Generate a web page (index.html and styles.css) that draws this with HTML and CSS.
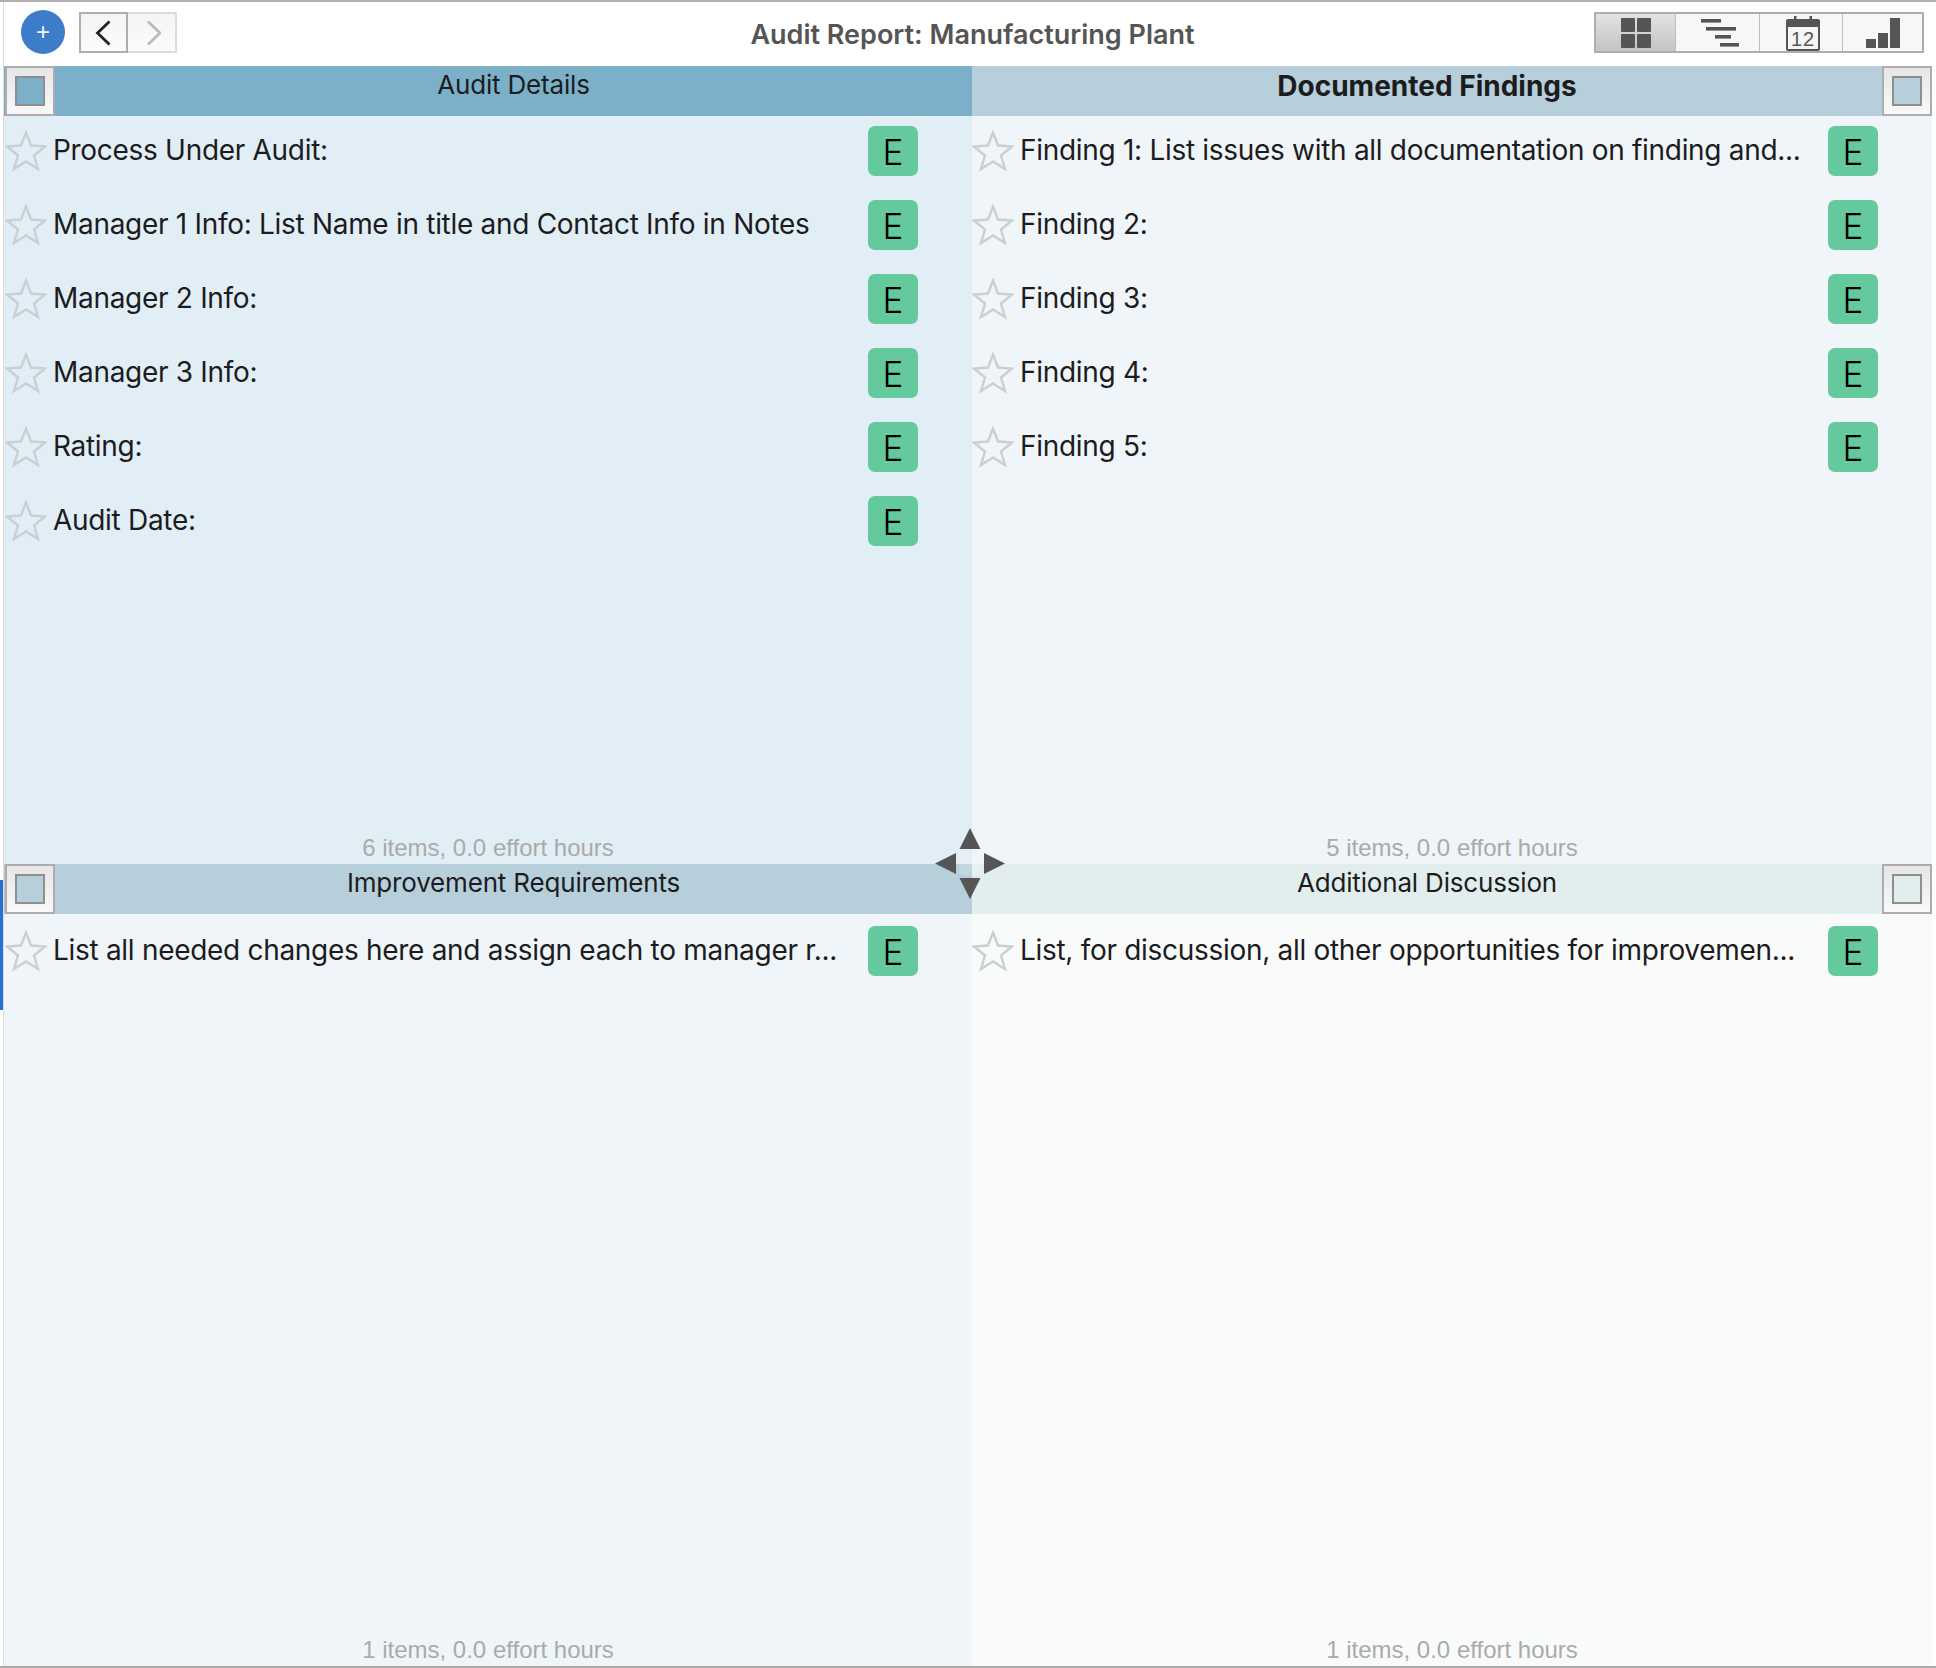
FILE: index.html
```html
<!DOCTYPE html>
<html lang="en">
<head>
<meta charset="utf-8">
<title>Audit Report: Manufacturing Plant</title>
<link rel="stylesheet" href="styles.css">
</head>
<body>
<svg class="defs" width="0" height="0" aria-hidden="true">
  <symbol id="star" viewBox="0 0 42 42"><polygon points="21,2.5 26,15.5 40,16.5 29,25.5 33,39 21,31.5 9,39 13,25.5 2,16.5 16,15.5" fill="none" stroke="#c9cfd3" stroke-width="2.4" stroke-linejoin="miter"/></symbol>
</svg>
<div class="app">
  <div class="marker"></div>
  <header class="toolbar">
    <div class="toolbar-left">
      <button class="add">+</button>
      <div class="nav">
        <span class="nav-btn nav-on"><svg width="18" height="26" viewBox="0 0 18 26"><path d="M14.5 1.5 L2.5 13 L14.5 24.5" fill="none" stroke="#222" stroke-width="2.8"/></svg></span>
        <span class="nav-btn nav-off"><svg width="18" height="26" viewBox="0 0 18 26"><path d="M5 1.5 L17 13 L5 24.5" fill="none" stroke="#bbb" stroke-width="2.8"/></svg></span>
      </div>
    </div>
    <div class="title">Audit Report: Manufacturing Plant</div>
    <div class="views">
      <span class="view view-on"><svg width="30" height="30" viewBox="0 0 30 30" fill="#555"><rect width="14" height="14" rx="1"/><rect x="16" width="14" height="14" rx="1"/><rect y="16" width="14" height="14" rx="1"/><rect x="16" y="16" width="14" height="14" rx="1"/></svg></span>
      <span class="view view-gantt"><svg width="38" height="28" viewBox="0 0 38 28" fill="#555"><rect width="20" height="3.6"/><rect x="5" y="8" width="30" height="3.6"/><rect x="14" y="16" width="16" height="3.6"/><rect x="19" y="24" width="19" height="3.6"/></svg></span>
      <span class="view view-cal"><svg width="34" height="36" viewBox="0 0 34 36"><rect x="1" y="5" width="32" height="30" rx="1" fill="#f6f6f6" stroke="#555" stroke-width="2"/><rect x="1" y="5" width="32" height="7" fill="#555"/><rect x="8" y="1" width="2.5" height="8" fill="#555"/><rect x="23.5" y="1" width="2.5" height="8" fill="#555"/><text x="17" y="31" class="cal-text" text-anchor="middle">12</text></svg></span>
      <span class="view"><svg width="34" height="30" viewBox="0 0 34 30" fill="#555"><rect y="21" width="10" height="9"/><rect x="12" y="15" width="10" height="15"/><rect x="24" width="10" height="30"/></svg></span>
    </div>
  </header>
  <main class="grid">
    <section class="pane p1">
      <div class="pane-head">
        <span class="corner"><i class="swatch"></i></span>
        <span class="pane-title">Audit Details</span>
      </div>
      <ul class="items">
        <li class="item"><svg class="star"><use href="#star"/></svg><span class="label">Process Under Audit:</span><span class="e">E</span></li>
        <li class="item"><svg class="star"><use href="#star"/></svg><span class="label">Manager 1 Info: List Name in title and Contact Info in Notes</span><span class="e">E</span></li>
        <li class="item"><svg class="star"><use href="#star"/></svg><span class="label">Manager 2 Info:</span><span class="e">E</span></li>
        <li class="item"><svg class="star"><use href="#star"/></svg><span class="label">Manager 3 Info:</span><span class="e">E</span></li>
        <li class="item"><svg class="star"><use href="#star"/></svg><span class="label">Rating:</span><span class="e">E</span></li>
        <li class="item"><svg class="star"><use href="#star"/></svg><span class="label">Audit Date:</span><span class="e">E</span></li>
      </ul>
      <div class="foot">6 items, 0.0 effort hours</div>
    </section>
    <section class="pane p2">
      <div class="pane-head head-right">
        <span class="pane-title bold">Documented Findings</span>
        <span class="corner"><i class="swatch"></i></span>
      </div>
      <ul class="items">
        <li class="item"><svg class="star"><use href="#star"/></svg><span class="label">Finding 1: List issues with all documentation on finding and...</span><span class="e">E</span></li>
        <li class="item"><svg class="star"><use href="#star"/></svg><span class="label">Finding 2:</span><span class="e">E</span></li>
        <li class="item"><svg class="star"><use href="#star"/></svg><span class="label">Finding 3:</span><span class="e">E</span></li>
        <li class="item"><svg class="star"><use href="#star"/></svg><span class="label">Finding 4:</span><span class="e">E</span></li>
        <li class="item"><svg class="star"><use href="#star"/></svg><span class="label">Finding 5:</span><span class="e">E</span></li>
      </ul>
      <div class="foot">5 items, 0.0 effort hours</div>
    </section>
    <section class="pane p3">
      <div class="pane-head">
        <span class="corner"><i class="swatch"></i></span>
        <span class="pane-title">Improvement Requirements</span>
      </div>
      <ul class="items">
        <li class="item"><svg class="star"><use href="#star"/></svg><span class="label">List all needed changes here and assign each to manager r...</span><span class="e">E</span></li>
      </ul>
      <div class="foot">1 items, 0.0 effort hours</div>
    </section>
    <section class="pane p4">
      <div class="pane-head head-right">
        <span class="pane-title">Additional Discussion</span>
        <span class="corner"><i class="swatch"></i></span>
      </div>
      <ul class="items">
        <li class="item"><svg class="star"><use href="#star"/></svg><span class="label">List, for discussion, all other opportunities for improvemen...</span><span class="e">E</span></li>
      </ul>
      <div class="foot">1 items, 0.0 effort hours</div>
    </section>
    <svg class="mover" width="70" height="71" viewBox="0 0 70 71" fill="#555"><rect x="24" y="24" width="22" height="23" fill="#fff" fill-opacity="0.15"/><polygon points="35,0 45.5,21 24.5,21"/><polygon points="35,71 45.5,50 24.5,50"/><polygon points="0,35.5 21,25 21,46"/><polygon points="70,35.5 49,25 49,46"/></svg>
  </main>
</div>
</body>
</html>
```
FILE: styles.css
```css
* { box-sizing: border-box; }
html, body { margin: 0; padding: 0; background: #fff; }
body { font-family: Inter, "Liberation Sans", sans-serif; color: #1c1c1e; }
.defs { position: absolute; }
.app {
  position: relative;
  width: 1936px;
  height: 1668px;
  padding: 0 4px 0 4px;
  border-top: 2px solid #b0b0b0;
  border-bottom: 2px solid #a9a9a9;
  display: flex;
  flex-direction: column;
  overflow: hidden;
}
.app::before {
  content: "";
  position: absolute;
  left: 3px;
  top: 0;
  bottom: 0;
  width: 1px;
  background: #dcdcdc;
}
.marker {
  position: absolute;
  left: 0;
  top: 878px;
  width: 3px;
  height: 130px;
  background: #2470d8;
}
.toolbar {
  height: 64px;
  flex: none;
  display: grid;
  grid-template-columns: 1fr auto 1fr;
  align-items: start;
  padding: 10px 8px 0 17px;
}
.toolbar-left { display: flex; align-items: flex-start; gap: 14px; }
.add {
  width: 44px;
  height: 44px;
  margin-top: -2px;
  border: 0;
  border-radius: 50%;
  background: #3d7cc9;
  color: #f2f6fb;
  font: 400 24px/44px "Liberation Sans", sans-serif;
  padding: 0;
}
.nav { display: flex; height: 41px; }
.nav-btn {
  width: 49px;
  height: 41px;
  display: flex;
  align-items: center;
  justify-content: center;
  background: linear-gradient(#f4f4f4, #fbfbfb);
}
.nav-on { border: 2px solid #aeaeae; }
.nav-off { border: 2px solid #dcdcdc; border-left: 0; }
.title {
  font-size: 27px;
  font-weight: 600;
  color: #555;
  line-height: 32px;
  margin-top: 7px;
  white-space: nowrap;
}
.views {
  justify-self: end;
  display: flex;
  width: 330px;
  height: 41px;
  border: 2px solid #aeaeae;
  background: #f7f7f7;
}
.view {
  flex: 1;
  display: flex;
  align-items: center;
  justify-content: center;
  border-left: 1px solid #bdbdbd;
}
.view:first-child { border-left: 0; }
.view-on { background: linear-gradient(#e2e2e2, #c4c4c4); }
.view-gantt { padding-left: 4px; }
.view-cal { padding-left: 3px; }
.cal-text { font: 400 20px "Liberation Sans", sans-serif; fill: #555; letter-spacing: 1px; }
.grid {
  position: relative;
  flex: 1;
  display: grid;
  grid-template-columns: 968px 960px;
  grid-template-rows: 798px 802px;
}
.pane { position: relative; display: flex; flex-direction: column; min-height: 0; }
.p1 { background: #e1eef5; --head: #7bb0c8; }
.p2 { background: #eff5f8; --head: #b6cfdb; }
.p3 { background: #eff5f8; --head: #b6cfdb; }
.p4 { background: #f9fbfb; --head: #e2eeee; }
.pane-head {
  height: 50px;
  flex: none;
  display: flex;
  background: var(--head);
}
.corner {
  width: 50px;
  height: 50px;
  flex: none;
  margin-left: 1px;
  border: 2px solid #adadad;
  background: linear-gradient(#e6e6e6, #f9f9f9);
  display: flex;
  align-items: center;
  justify-content: center;
}
.head-right .corner { margin-left: 0; }
.swatch {
  display: block;
  width: 30px;
  height: 30px;
  border: 2px solid #8f8f8f;
  background: var(--head);
}
.pane-title {
  flex: 1;
  text-align: center;
  font-size: 26px;
  line-height: 38px;
  letter-spacing: -0.18px;
}
.bold { font-size: 28px; font-weight: 700; line-height: 40px; letter-spacing: 0; }
.items {
  list-style: none;
  margin: 0;
  padding: 10px 54px 0 0;
  flex: 1;
  display: flex;
  flex-direction: column;
  gap: 24px;
}
.p3 .items, .p4 .items { padding-top: 12px; }
.item { height: 50px; display: flex; align-items: center; }
.star { width: 42px; height: 42px; flex: none; margin: 0 6px 0 1px; }
.p2 .star, .p4 .star { margin: 0 6px 0 0; }
.label {
  flex: 1;
  min-width: 0;
  font-size: 28px;
  letter-spacing: -0.3px;
  line-height: 36px;
  margin-top: -2px;
  white-space: nowrap;
}
.e {
  width: 50px;
  height: 50px;
  flex: none;
  border-radius: 7px;
  background: #64c99c;
  color: #000;
  font-size: 35px;
  font-weight: 300;
  line-height: 52px;
  text-align: center;
}
.foot {
  flex: none;
  text-align: center;
  font: 400 24px/28px "Liberation Sans", sans-serif;
  color: #aaa;
  padding-bottom: 2px;
}
.mover { position: absolute; left: 931px; top: 762px; }
```
